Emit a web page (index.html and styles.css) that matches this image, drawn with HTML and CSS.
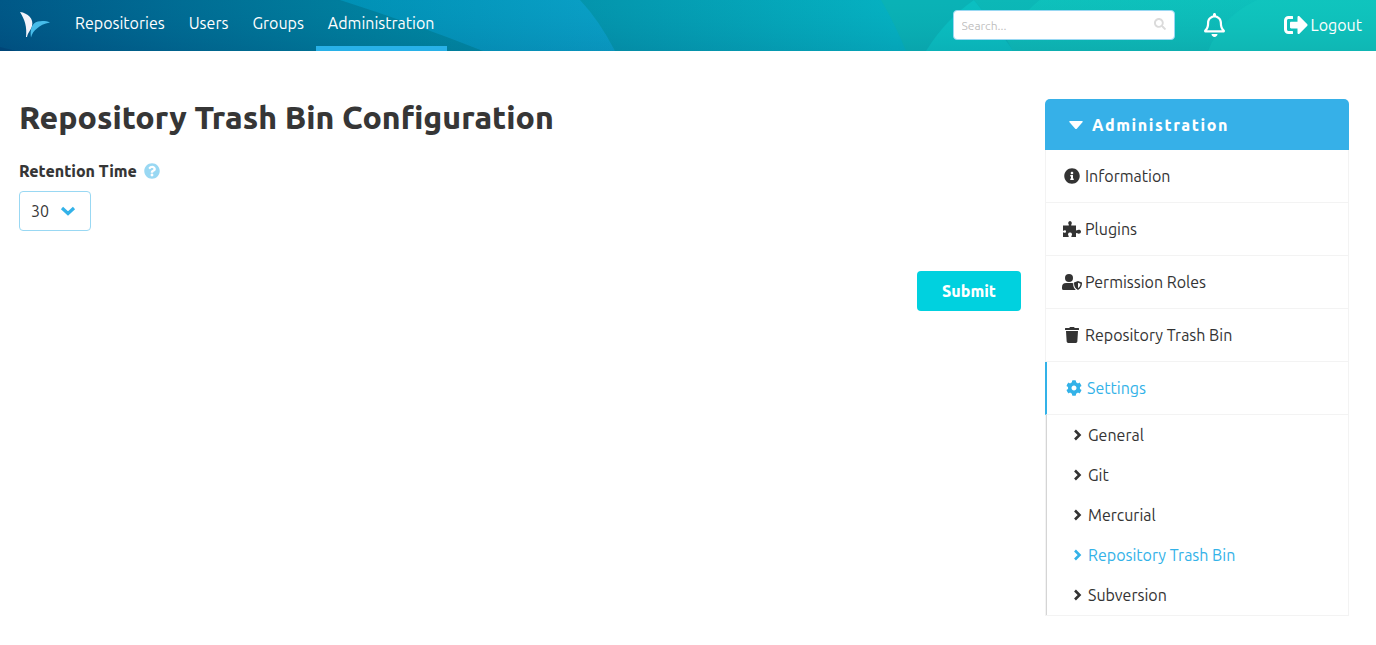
FILE: index.html
```html
<!DOCTYPE html>
<html lang="en">
<head>
<meta charset="utf-8">
<meta name="viewport" content="width=device-width, initial-scale=1">
<title>Repository Trash Bin Configuration</title>
<link rel="stylesheet" href="styles.css">
</head>
<body>
<svg class="sprite" aria-hidden="true">
  <symbol id="chevron" viewBox="0 0 10 12"><path d="M2 1.500L6.500 6 2 10.500" fill="none" stroke="currentColor" stroke-width="2.600"/></symbol>
</svg>
<header class="topbar">
  <svg class="topbar-art" viewBox="0 0 1376 51" preserveAspectRatio="none" aria-hidden="true">
    <defs>
      <linearGradient id="base" x1="0" y1="0" x2="1" y2="0">
        <stop offset="0" stop-color="#005182"/>
        <stop offset=".12" stop-color="#00658f"/>
        <stop offset=".3" stop-color="#00809d"/>
        <stop offset=".45" stop-color="#0494ac"/>
        <stop offset=".65" stop-color="#05aebf"/>
        <stop offset="1" stop-color="#0cb5b5"/>
      </linearGradient>
      <linearGradient id="shade" x1="0" y1="0" x2="0" y2="1">
        <stop offset="0" stop-color="#00ffff" stop-opacity=".04"/>
        <stop offset="1" stop-color="#003060" stop-opacity=".08"/>
      </linearGradient>
      <linearGradient id="blue" x1="0" y1="0" x2="1" y2="0">
        <stop offset="0" stop-color="#008cb2"/>
        <stop offset="1" stop-color="#0a9cc4"/>
      </linearGradient>
      <linearGradient id="teal" x1="0" y1="0" x2="0" y2="1">
        <stop offset="0" stop-color="#0ebeb9"/>
        <stop offset="1" stop-color="#0eb9b6"/>
      </linearGradient>
    </defs>
    <path fill="url(#base)" d="M0 0h1376v51H0z"/>
    <path fill="#003c70" fill-opacity=".5" d="M0 47l16 4H0z"/>
    <path fill="url(#blue)" d="M340 0h240q19 20 35 51H483Q415 24 340 0z"/>
    <path fill="#0aafb3" d="M881 0h495v51H906Q895 24 881 0z"/>
    <path fill="#0bbdbf" d="M974 0l40 51h-88Q945 20 974 0z"/>
    <path fill="#0cb5b4" d="M974 0h80v51h-41L1007 40z"/>
    <path fill="url(#teal)" d="M1040 0h336v51h-363l-6-11q13-25 33-40z"/>
    <path fill="#10c2bb" d="M1257 0h119v51h-168q13-34 49-51z"/>
    <path fill="url(#shade)" d="M0 0h1376v51H0z"/>
  </svg>
  <a class="logo" href="#" aria-label="Home">
    <svg viewBox="0 0 32 28" width="32" height="28"><path fill="#f4f4fb" d="M1 1c8 1 14 7 12 14-1 4-4 6-5 11H7c1-10-1-17-6-25z"/><path fill="#47bce9" d="M12 26.500c-1-6 0-11 3-14 4-3 11-3 16-1-6 1-10 3-13 6-3 2-5 5-6 9z"/></svg>
  </a>
  <nav class="nav" aria-label="Main">
    <a href="#">Repositories</a>
    <a href="#">Users</a>
    <a href="#">Groups</a>
    <a class="current" href="#" aria-current="page">Administration</a>
  </nav>
  <div class="tools">
    <form class="search" role="search">
      <input type="search" placeholder="Search..." aria-label="Search">
      <svg class="search-icon" viewBox="0 0 512 512" width="12" height="12" aria-hidden="true"><path fill="currentColor" d="M505 442.700L405.300 343c-4.500-4.500-10.600-7-17-7H372c27.600-35.300 44-79.700 44-128C416 93.100 322.900 0 208 0S0 93.100 0 208s93.100 208 208 208c48.300 0 92.700-16.400 128-44v16.300c0 6.400 2.500 12.500 7 17l99.700 99.700c9.400 9.400 24.600 9.400 33.900 0l28.300-28.300c9.400-9.400 9.400-24.600.1-34zM208 336c-70.700 0-128-57.200-128-128 0-70.700 57.200-128 128-128 70.700 0 128 57.200 128 128 0 70.700-57.200 128-128 128z"/></svg>
    </form>
    <button class="bell" type="button" aria-label="Notifications">
      <svg viewBox="0 0 448 512" width="21" height="24"><path fill="currentColor" d="M439.390 362.290c-19.320-20.760-55.470-51.990-55.470-154.290 0-77.700-54.480-139.900-127.940-155.160V32c0-17.670-14.320-32-31.980-32s-31.980 14.330-31.980 32v20.840C118.560 68.100 64.080 130.300 64.080 208c0 102.300-36.150 133.530-55.470 154.290-6 6.450-8.660 14.160-8.610 21.710.11 16.400 12.980 32 32.100 32h383.800c19.120 0 32-15.600 32.100-32 .05-7.550-2.610-15.270-8.610-21.710zM67.530 368c21.220-27.970 44.420-74.330 44.530-159.420 0-.2-.06-.38-.06-.58 0-61.860 50.140-112 112-112s112 50.140 112 112c0 .2-.06.38-.06.58.11 85.100 23.310 131.460 44.530 159.420H67.530zM224 512c35.320 0 63.970-28.650 63.970-64H160.030c0 35.350 28.650 64 63.970 64z"/></svg>
    </button>
    <a class="logout" href="#">
      <svg viewBox="0 0 512 512" width="24" height="24" aria-hidden="true"><path fill="currentColor" d="M497 273L329 441c-15 15-41 4.500-41-17v-96H152c-13.300 0-24-10.700-24-24v-96c0-13.300 10.700-24 24-24h136V88c0-21.400 25.900-32 41-17l168 168c9.300 9.400 9.300 24.600 0 34zM192 436v-40c0-6.600-5.400-12-12-12H96c-17.700 0-32-14.300-32-32V160c0-17.700 14.300-32 32-32h84c6.600 0 12-5.400 12-12V76c0-6.600-5.400-12-12-12H96c-53 0-96 43-96 96v192c0 53 43 96 96 96h84c6.600 0 12-5.400 12-12z"/></svg>
      Logout
    </a>
  </div>
</header>

<div class="page">
  <main class="content">
    <h1>Repository Trash Bin Configuration</h1>
    <form class="config">
      <div class="field-head">
        <label for="retention">Retention Time</label>
        <svg class="help" viewBox="0 0 512 512" width="16" height="16" role="img" aria-label="Help"><path fill="currentColor" d="M504 256c0 136.997-111.043 248-248 248S8 392.997 8 256C8 119.083 119.043 8 256 8s248 111.083 248 248zM262.655 90c-54.497 0-89.255 22.957-116.549 63.758-3.536 5.286-2.353 12.415 2.715 16.258l34.699 26.310c5.205 3.947 12.621 3.008 16.665-2.122 17.864-22.658 30.113-35.797 57.303-35.797 20.429 0 45.698 13.148 45.698 32.958 0 14.976-12.363 22.667-32.534 33.976C247.128 238.528 216 254.941 216 296v4c0 6.627 5.373 12 12 12h56c6.627 0 12-5.373 12-12v-1.333c0-28.462 83.186-29.647 83.186-106.667 0-58.002-60.165-102-116.531-102zM256 338c-25.365 0-46 20.635-46 46 0 25.364 20.635 46 46 46s46-20.636 46-46c0-25.365-20.635-46-46-46z"/></svg>
      </div>
      <div class="select">
        <select id="retention"><option>30</option></select>
        <svg class="select-arrow" viewBox="0 0 16 10" width="16" height="10" aria-hidden="true"><path d="M2 2L8 7.500 14 2" fill="none" stroke="currentColor" stroke-width="3.200"/></svg>
      </div>
      <button class="submit" type="submit">Submit</button>
    </form>
  </main>

  <aside class="menu">
    <button class="menu-title" type="button" aria-expanded="true">
      <svg viewBox="0 0 14 8" width="14" height="8" aria-hidden="true"><path fill="currentColor" d="M1 0h12q1 0 .7 1L8 7.400q-1 1-2 0L.3 1Q0 0 1 0z"/></svg>
      Administration
    </button>
    <nav class="menu-list" aria-label="Administration">
      <a href="#"><span class="icon"><svg viewBox="0 0 512 512" width="16" height="16"><path fill="currentColor" d="M256 8C119.043 8 8 119.083 8 256c0 136.997 111.043 248 248 248s248-111.003 248-248C504 119.083 392.957 8 256 8zm0 110c23.196 0 42 18.804 42 42s-18.804 42-42 42-42-18.804-42-42 18.804-42 42-42zm56 254c0 6.627-5.373 12-12 12h-88c-6.627 0-12-5.373-12-12v-24c0-6.627 5.373-12 12-12h12v-64h-12c-6.627 0-12-5.373-12-12v-24c0-6.627 5.373-12 12-12h64c6.627 0 12 5.373 12 12v100h12c6.627 0 12 5.373 12 12v24z"/></svg></span>Information</a>
      <a href="#"><span class="icon"><svg viewBox="0 0 18 16" width="18" height="16"><path fill="currentColor" d="M0 4.500h5.300c.6 0 .8-.5.400-1C4.800 2.300 5.300 0 7 0s2.300 2.300 1.400 3.500c-.4.500-.2 1 .4 1H13v4.300c0 .7.500.9 1 .5 1.400-1 4-.6 4 1.400s-2.600 2.400-4 1.400c-.5-.4-1-.2-1 .5V16H9c-.6 0-.9-.5-.5-1 1.100-1.600.5-3.600-1.500-3.600S4.500 13.400 5.600 15c.3.500.1 1-.5 1H0v-4c0-.6.400-.8.900-.5 1 .7 2.100.3 2.100-.9s-1.100-1.600-2.100-.9c-.5.300-.9.100-.9-.5z"/></svg></span>Plugins</a>
      <a href="#"><span class="icon"><svg viewBox="0 0 20 16" width="20" height="16"><circle cx="7" cy="4" r="4" fill="currentColor"/><path fill="currentColor" d="M4.200 9h5.600q.8 0 1.500.3c-.4 2.600.5 5 2.500 6.700H1.500Q0 16 0 14.500v-1.300Q0 9 4.200 9z"/><path fill="currentColor" fill-rule="evenodd" d="M16 7l4 1.600c.1 3.500-1.200 6-4 7.400-2.800-1.400-4.100-3.900-4-7.400zm0 1.700v5.500c1.700-1.100 2.500-2.600 2.500-4.500z"/></svg></span>Permission Roles</a>
      <a href="#"><span class="icon"><svg viewBox="0 0 448 512" width="14" height="16"><path fill="currentColor" d="M432 32H312l-9.400-18.700A24 24 0 0 0 281.100 0H166.800a23.720 23.720 0 0 0-21.400 13.300L136 32H16A16 16 0 0 0 0 48v32a16 16 0 0 0 16 16h416a16 16 0 0 0 16-16V48a16 16 0 0 0-16-16zM53.200 467a48 48 0 0 0 47.900 45h245.800a48 48 0 0 0 47.900-45L416 128H32z"/></svg></span>Repository Trash Bin</a>
      <a class="active" href="#"><span class="icon"><svg viewBox="0 0 512 512" width="16" height="16"><path fill="currentColor" d="M487.400 315.700l-42.600-24.600c4.300-23.200 4.300-47 0-70.200l42.600-24.600c4.900-2.800 7.100-8.600 5.500-14-11.100-35.600-30-67.800-54.700-94.600-3.800-4.100-10-5.100-14.800-2.300L380.800 110c-17.900-15.400-38.500-27.300-60.800-35.100V25.800c0-5.600-3.900-10.500-9.400-11.700-36.700-8.200-74.300-7.800-109.200 0-5.500 1.200-9.400 6.100-9.400 11.700V75c-22.200 7.900-42.800 19.800-60.800 35.100L88.700 85.500c-4.900-2.800-11-1.900-14.800 2.300-24.700 26.700-43.600 58.900-54.700 94.600-1.700 5.400.6 11.200 5.500 14L67.300 221c-4.300 23.200-4.300 47 0 70.200l-42.600 24.600c-4.900 2.800-7.100 8.600-5.500 14 11.100 35.600 30 67.800 54.700 94.600 3.800 4.100 10 5.100 14.800 2.300l42.600-24.600c17.900 15.400 38.500 27.300 60.800 35.100v49.200c0 5.600 3.900 10.500 9.400 11.700 36.700 8.200 74.300 7.800 109.200 0 5.500-1.200 9.400-6.100 9.400-11.700v-49.200c22.200-7.900 42.800-19.800 60.800-35.100l42.600 24.600c4.900 2.800 11 1.900 14.800-2.300 24.700-26.700 43.600-58.900 54.700-94.600 1.500-5.500-.7-11.300-5.600-14.100zM256 336c-44.100 0-80-35.900-80-80s35.900-80 80-80 80 35.900 80 80-35.900 80-80 80z"/></svg></span>Settings</a>
      <div class="submenu">
        <a href="#"><svg width="10" height="12"><use href="#chevron"/></svg>General</a>
        <a href="#"><svg width="10" height="12"><use href="#chevron"/></svg>Git</a>
        <a href="#"><svg width="10" height="12"><use href="#chevron"/></svg>Mercurial</a>
        <a class="chosen" href="#" aria-current="page"><svg width="10" height="12"><use href="#chevron"/></svg>Repository Trash Bin</a>
        <a href="#"><svg width="10" height="12"><use href="#chevron"/></svg>Subversion</a>
      </div>
    </nav>
  </aside>
</div>
</body>
</html>
```
FILE: styles.css
```css
* { box-sizing: border-box; }

body {
  margin: 0;
  background: #fff;
  color: #363636;
  font: 16px/24px Ubuntu, "Noto Sans", "Open Sans", sans-serif;
}

a { color: inherit; text-decoration: none; }
button, input, select { font: inherit; color: inherit; }
svg { display: block; flex: none; }
.sprite { position: absolute; width: 0; height: 0; }

/* Top bar */
.topbar {
  position: relative;
  display: flex;
  align-items: stretch;
  min-height: 51px;
  padding: 0 14px 0 19px;
  color: #fff;
}
.topbar-art {
  position: absolute;
  inset: 0;
  z-index: -1;
  width: 100%;
  height: 100%;
}
.logo { display: flex; align-items: center; margin-right: 12px; padding-bottom: 2px; }
.nav { display: flex; }
.nav a {
  display: flex;
  align-items: center;
  padding: 0 12px;
  border-bottom: 5px solid transparent;
}
.nav .current { border-bottom-color: #28b1e8; }

.tools {
  display: flex;
  align-items: center;
  margin-left: auto;
  padding-bottom: 1px;
}
.search { position: relative; width: 222px; }
.search input {
  display: block;
  width: 100%;
  height: 30px;
  padding: 0 28px 0 8px;
  border: 1px solid #98d8f3;
  border-radius: 4px;
  background: #fff;
  color: #363636;
  font-size: 12px;
  appearance: none;
}
.search input::placeholder { color: #bfbfbf; opacity: 1; }
.search-icon { position: absolute; top: 8px; right: 9px; color: #dbdbdb; }
.bell {
  margin: 0 59px 0 29px;
  padding: 0;
  border: 0;
  background: none;
  color: #fff;
}
.logout { display: flex; align-items: center; gap: 3px; }

/* Page */
.page {
  display: grid;
  grid-template-columns: minmax(0, 1fr) 304px;
  gap: 24px;
  align-items: start;
  padding: 48px 27px 24px 19px;
}
h1 {
  margin: 0 0 24px;
  font-size: 32px;
  line-height: 36px;
  font-weight: 800;
}
.config { display: flex; flex-direction: column; align-items: flex-start; }
.field-head {
  display: flex;
  align-items: center;
  gap: 7px;
  margin-bottom: 8px;
  font-weight: 800;
}
.help { color: #99d8f3; }
.select { position: relative; }
.select select {
  display: block;
  width: 72px;
  height: 40px;
  padding: 0 32px 0 11px;
  border: 1px solid #99d8f3;
  border-radius: 4px;
  background: #fff;
  appearance: none;
}
.select-arrow {
  position: absolute;
  top: 15px;
  right: 15px;
  color: #33b2e8;
  pointer-events: none;
}
.submit {
  align-self: flex-end;
  min-width: 104px;
  height: 40px;
  margin-top: 40px;
  padding: 0 24px;
  border: 0;
  border-radius: 4px;
  background: #00d1df;
  color: #fff;
  font-weight: 800;
}

/* Side menu */
.menu-title {
  display: flex;
  align-items: center;
  gap: 9px;
  width: 100%;
  height: 51px;
  padding: 0 24px;
  border: 0;
  border-radius: 5px 5px 0 0;
  background: #36b0e8;
  color: #fff;
  font-weight: 800;
  letter-spacing: 0.1em;
}
.menu-list {
  border: 1px solid #f3f3f3;
  border-top: 0;
  color: #333;
}
.menu-list > a {
  display: flex;
  align-items: center;
  gap: 3px;
  height: 53px;
  padding: 0 15px;
  border-bottom: 1px solid #f3f3f3;
}
.icon { display: flex; justify-content: center; width: 21px; }
.menu-list > .active {
  margin-left: -1px;
  padding-left: 16px;
  border-left: 2px solid #33b2e8;
  color: #33b2e8;
}
.submenu { border-left: 1px solid #d5d5d5; }
.submenu a {
  display: flex;
  align-items: center;
  gap: 5px;
  height: 40px;
  padding: 0 26px;
}
.submenu .chosen { color: #33b2e8; }
```
